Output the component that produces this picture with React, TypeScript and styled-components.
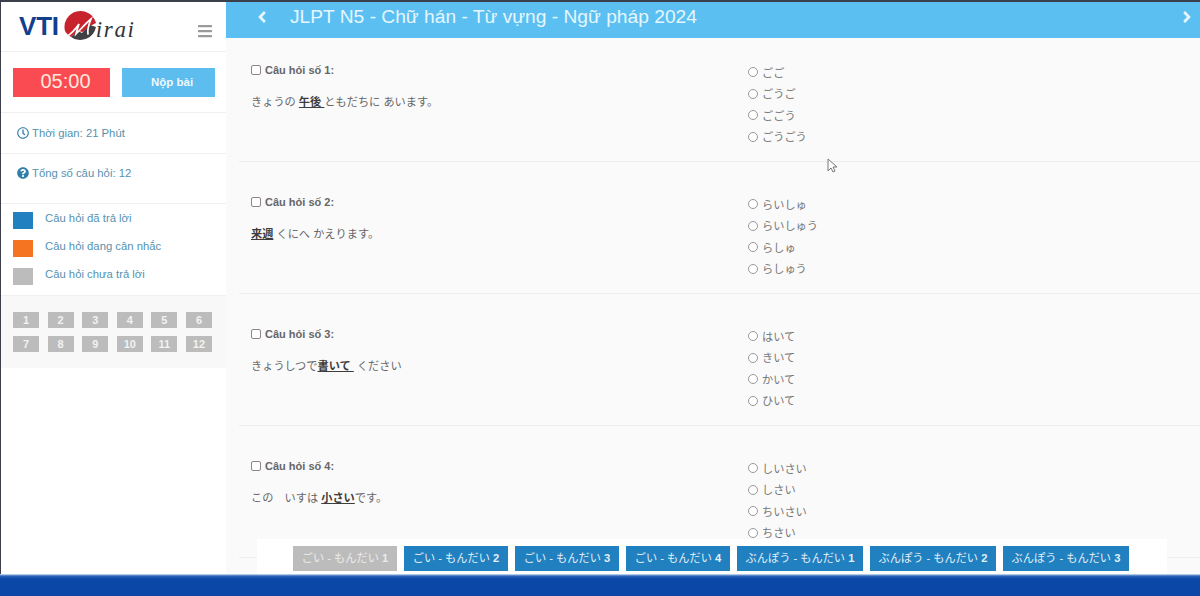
import { FaAngleLeft, FaAngleRight, FaBars, FaQuestionCircle, FaRegClock } from 'react-icons/fa';
import styled, { createGlobalStyle } from 'styled-components';

const GlobalStyle = createGlobalStyle`
  html, body {
    margin: 0;
    padding: 0;
    background: #fff;
  }
  * {
    box-sizing: border-box;
  }
`;

const fontStack = `"Liberation Sans", "Noto Sans CJK JP", sans-serif`;

const Page = styled.div`
  position: relative;
  display: flex;
  flex-direction: column;
  width: 1200px;
  height: 596px;
  overflow: hidden;
  border-top: 2px solid #3c404c;
  font-family: ${fontStack};
`;

const Body = styled.div`
  display: flex;
  flex: 1;
  min-height: 0;
`;

const Sidebar = styled.aside`
  flex: 0 0 226px;
  border-left: 1px solid #3c404c;
  background: #fff;
`;

const LogoRow = styled.div`
  display: flex;
  align-items: center;
  justify-content: space-between;
  height: 50px;
  padding: 0 13px 0 18px;
  border-bottom: 1px solid #f0f0f0;
`;

const MenuIcon = styled(FaBars)`
  margin-top: 8px;
  color: #9a9a9a;
  font-size: 16px;
`;

const Logo = styled.div`
  display: flex;
  align-items: center;
`;

const LogoVti = styled.span`
  color: #123f8f;
  font-size: 26px;
  font-weight: 700;
  letter-spacing: -0.2px;
`;

const LogoMark = styled.svg`
  margin: -5px 0 0 4px;
`;

const LogoMirai = styled.span`
  margin: 6px 0 0 -1px;
  color: #33343a;
  font-family: "Liberation Serif", serif;
  font-size: 23px;
  font-style: italic;
  line-height: 24px;
  letter-spacing: 1.6px;
`;

const TimerRow = styled.div`
  display: flex;
  justify-content: space-between;
  height: 61px;
  padding: 16px 11px 0 12px;
  border-bottom: 1px solid #f0f0f0;
`;

const Countdown = styled.div`
  display: flex;
  align-items: center;
  justify-content: center;
  width: 97px;
  height: 29px;
  padding: 0 0 2px 8px;
  background: #fb4b52;
  color: #fde8de;
  font-size: 20px;
`;

const SubmitButton = styled.button`
  width: 93px;
  height: 29px;
  padding: 0 0 2px 7px;
  border: 0;
  background: #5cbdee;
  color: #eef8fd;
  font-family: inherit;
  font-size: 11.5px;
  font-weight: 700;
`;

const InfoRow = styled.div<{ $height: number; $top: number }>`
  display: flex;
  align-items: flex-start;
  gap: 3px;
  height: ${(p) => p.$height}px;
  padding: ${(p) => p.$top}px 0 0 16px;
  border-bottom: 1px solid #f0f0f0;
  color: #5692af;
  font-size: 11.3px;
  line-height: 14px;
  svg {
    margin-top: 1px;
    color: #2f7fa8;
    font-size: 12px;
  }
`;

const Legend = styled.div`
  display: flex;
  flex-direction: column;
  gap: 11px;
  height: 92px;
  padding: 8px 0 0 12px;
  border-bottom: 1px solid #f0f0f0;
`;

const LegendRow = styled.div`
  display: flex;
  align-items: flex-start;
  gap: 12px;
  height: 17px;
  color: #5692af;
  font-size: 11.3px;
  line-height: 13px;
`;

const Swatch = styled.span<{ $color: string }>`
  flex: 0 0 20px;
  height: 17px;
  background: ${(p) => p.$color};
`;

const NumberGrid = styled.div`
  display: grid;
  grid-template-columns: repeat(6, 26px);
  grid-auto-rows: 16px;
  column-gap: 8.6px;
  row-gap: 8px;
  height: 72px;
  padding: 16px 0 0 12px;
  background: #f8f8f8;
`;

const NumberCell = styled.span`
  display: flex;
  align-items: center;
  justify-content: center;
  background: #bcbcbc;
  color: #f2f2f2;
  font-size: 11px;
  font-weight: 700;
`;

const Main = styled.main`
  display: flex;
  flex: 1;
  flex-direction: column;
  min-width: 0;
  background: #fafafa;
`;

const TitleBar = styled.header`
  display: flex;
  flex: 0 0 36px;
  align-items: center;
  padding: 0 4px 6px 27px;
  background: #5bc0f1;
  color: #e6f6fe;
  font-size: 18px;
`;

const Title = styled.h1`
  flex: 1;
  margin: 0 0 0 19px;
  font-size: 19.2px;
  font-weight: 400;
`;

const QuestionList = styled.div`
  flex: 1;
  min-height: 0;
  margin-left: 13px;
`;

const QuestionRow = styled.section`
  display: flex;
  height: 132px;
  padding: 32px 0 0 12px;
  border-bottom: 1px solid #eeeeee;
  &:first-child {
    height: 124px;
    padding-top: 24px;
  }
`;

const Prompt = styled.div`
  flex: 0 0 497px;
`;

const QuestionLabel = styled.label`
  display: flex;
  align-items: center;
  gap: 4px;
  height: 16px;
  color: #666;
  font-size: 11px;
  font-weight: 700;
`;

const CheckBox = styled.input`
  appearance: none;
  width: 10px;
  height: 10px;
  margin: 0;
  border: 1px solid #888;
  border-radius: 2px;
  background: #fff;
`;

const QuestionText = styled.p`
  margin: 16px 0 0;
  color: #666;
  font-size: 11.2px;
  line-height: 16px;
  u {
    color: #3d3d3d;
    font-weight: 700;
  }
`;

const Options = styled.div`
  display: flex;
  flex-direction: column;
  gap: 5.67px;
  padding-top: 1.5px;
`;

const OptionLabel = styled.label`
  display: flex;
  align-items: center;
  gap: 4px;
  height: 16px;
  color: #777;
  font-size: 11.2px;
`;

const Radio = styled.input`
  appearance: none;
  width: 10px;
  height: 10px;
  margin: 1px 0 0;
  border: 1px solid #999;
  border-radius: 50%;
  background: #fff;
`;

const PartStrip = styled.nav`
  position: absolute;
  left: 257px;
  bottom: 22px;
  display: flex;
  gap: 7px;
  width: 910px;
  height: 35px;
  padding: 7px 0 0 36px;
  background: #fff;
`;

const PartButton = styled.button<{ $width: number; $active?: boolean }>`
  flex: 0 0 ${(p) => p.$width}px;
  height: 25px;
  padding: 0 0 3px;
  border: 0;
  background: ${(p) => (p.$active ? '#bcbcbc' : '#2080c0')};
  color: ${(p) => (p.$active ? '#ececec' : '#e4f0f8')};
  font-family: inherit;
  font-size: 11.2px;
`;

const BottomBar = styled.footer`
  flex: 0 0 22px;
  background: linear-gradient(#dfe9f6 0, #2a64b8 2px, #0a47a6 5px);
`;

const Pointer = styled.svg`
  position: absolute;
  left: 827px;
  top: 156px;
`;

const questions = [
  {
    text: <>きょうの <u>午後 </u>ともだちに あいます。</>,
    options: ['ごご', 'ごうご', 'ごごう', 'ごうごう'],
  },
  {
    text: <><u>来週</u> くにへ かえります。</>,
    options: ['らいしゅ', 'らいしゅう', 'らしゅ', 'らしゅう'],
  },
  {
    text: <>きょうしつで<u>書いて&nbsp;</u> ください</>,
    options: ['はいて', 'きいて', 'かいて', 'ひいて'],
  },
  {
    text: <>この　いすは <u>小さい</u>です。</>,
    options: ['しいさい', 'しさい', 'ちいさい', 'ちさい'],
  },
];

const parts = [
  { label: 'ごい - もんだい', no: 1, width: 104, active: true },
  { label: 'ごい - もんだい', no: 2, width: 104 },
  { label: 'ごい - もんだい', no: 3, width: 104 },
  { label: 'ごい - もんだい', no: 4, width: 104 },
  { label: 'ぶんぽう - もんだい', no: 1, width: 126 },
  { label: 'ぶんぽう - もんだい', no: 2, width: 126 },
  { label: 'ぶんぽう - もんだい', no: 3, width: 126 },
];

const App = () => {
  return (
    <Page>
      <GlobalStyle />
      <Body>
        <Sidebar>
          <LogoRow>
            <Logo>
              <LogoVti>VTI</LogoVti>
              <LogoMark width="34" height="34" viewBox="0 0 34 34">
                <path d="M2 24A16 16 0 1 1 33 16L27 19 20 25 15 24 8 30C5 28 3 26 2 24z" fill="#c8232c" />
                <path d="M8 30 15 24 19 26 27 18 33 20A16 16 0 0 1 8 30z" fill="#404044" />
                <path d="M3 30C8 27 12 23 16 17 15 20 14 23 13 27 18 22 23 16 28 12 26 17 24 22 25 27" fill="none" stroke="#fff" strokeWidth="1.7" strokeLinecap="round" />
              </LogoMark>
              <LogoMirai>irai</LogoMirai>
            </Logo>
            <MenuIcon />
          </LogoRow>
          <TimerRow>
            <Countdown>05:00</Countdown>
            <SubmitButton>Nộp bài</SubmitButton>
          </TimerRow>
          <InfoRow $height={41} $top={13}><FaRegClock /> Thời gian: 21 Phút</InfoRow>
          <InfoRow $height={50} $top={12}><FaQuestionCircle /> Tổng số câu hỏi: 12</InfoRow>
          <Legend>
            <LegendRow><Swatch $color="#2080c0" /> Câu hỏi đã trả lời</LegendRow>
            <LegendRow><Swatch $color="#f47421" /> Câu hỏi đang cân nhắc</LegendRow>
            <LegendRow><Swatch $color="#bcbcbc" /> Câu hỏi chưa trả lời</LegendRow>
          </Legend>
          <NumberGrid>
            {Array.from({ length: 12 }, (_, i) => (
              <NumberCell key={i}>{i + 1}</NumberCell>
            ))}
          </NumberGrid>
        </Sidebar>
        <Main>
          <TitleBar>
            <FaAngleLeft />
            <Title>JLPT N5 - Chữ hán - Từ vựng - Ngữ pháp 2024</Title>
            <FaAngleRight />
          </TitleBar>
          <QuestionList>
            {questions.map((q, i) => (
              <QuestionRow key={i}>
                <Prompt>
                  <QuestionLabel>
                    <CheckBox type="checkbox" /> Câu hỏi số {i + 1}:
                  </QuestionLabel>
                  <QuestionText>{q.text}</QuestionText>
                </Prompt>
                <Options>
                  {q.options.map((option) => (
                    <OptionLabel key={option}>
                      <Radio type="radio" name={`q${i}`} /> {option}
                    </OptionLabel>
                  ))}
                </Options>
              </QuestionRow>
            ))}
          </QuestionList>
        </Main>
      </Body>
      <BottomBar />
      <PartStrip>
        {parts.map((part) => (
          <PartButton key={part.label + part.no} $width={part.width} $active={part.active}>
            {part.label} <b>{part.no}</b>
          </PartButton>
        ))}
      </PartStrip>
      <Pointer width="10" height="16" viewBox="0 0 10 16">
        <path d="M1 1v12l3-3 2 4 2-1-2-4h4z" fill="#fff" stroke="#777" strokeWidth="1" />
      </Pointer>
    </Page>
  );
};

export default App;
